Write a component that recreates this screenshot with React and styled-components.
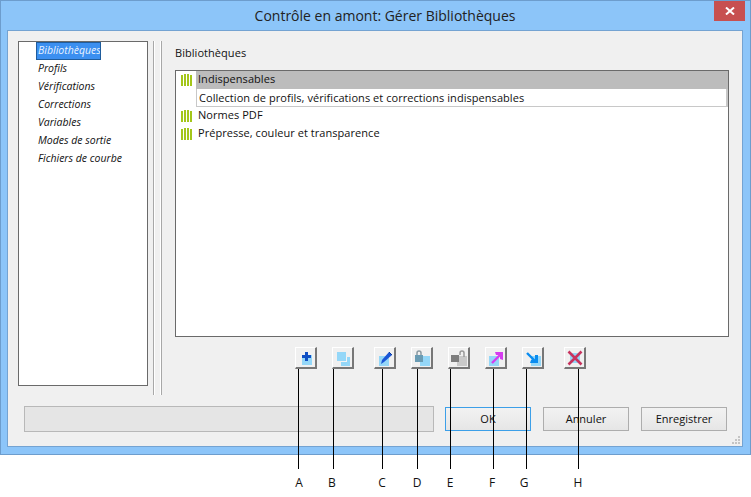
import React from 'react';
import styled, { createGlobalStyle } from 'styled-components';

const GlobalStyle = createGlobalStyle`
  html, body {
    margin: 0;
    padding: 0;
    background: #fff;
    font-family: 'Open Sans', 'Noto Sans', sans-serif;
    color: #111;
  }
`;

const Page = styled.div`
  position: relative;
  width: 751px;
  height: 497px;
  overflow: hidden;
`;

const Window = styled.div`
  box-sizing: border-box;
  width: 751px;
  height: 455px;
  display: flex;
  flex-direction: column;
  background: #8cc5f9;
  border: 1px solid #6d9dcd;
  padding: 0 7px 7px 6px;
`;

const TitleBar = styled.div`
  position: relative;
  height: 29px;
  flex: none;
  display: flex;
  align-items: center;
  justify-content: center;
  padding-left: 20px;
  font-size: 14px;
  color: #222;
`;

const CloseButton = styled.div`
  position: absolute;
  right: -2px;
  top: 0;
  width: 31px;
  height: 20px;
  background: #c75050;
  display: flex;
  align-items: center;
  justify-content: center;
`;

const Client = styled.div`
  position: relative;
  box-sizing: border-box;
  flex: 1;
  display: flex;
  flex-direction: column;
  background: #f0f0f0;
  border: 1px solid #74a3d2;
  padding: 10px 15px 0 10px;
`;

const Main = styled.div`
  display: flex;
  height: 354px;
`;

const NavList = styled.div`
  box-sizing: border-box;
  flex: none;
  width: 130px;
  height: 345px;
  background: #fff;
  border: 1px solid #6a6a6a;
  padding: 0 0 0 17px;
  display: flex;
  flex-direction: column;
  align-items: flex-start;
`;

const NavItem = styled.div`
  box-sizing: border-box;
  height: 18px;
  line-height: 16px;
  font-size: 10.5px;
  font-style: italic;
  padding: 0 2px;
  white-space: nowrap;
  ${({ $selected }) => $selected && `
    width: 65px;
    background: #3b8ff0;
    color: #e8f2ff;
    outline: 1px solid #1f5c9c;
    outline-offset: -1px;
  `}
`;

const Sash = styled.div`
  flex: none;
  width: 7px;
  margin-left: 5px;
  border-left: 1px solid #a8a8a8;
  border-right: 1px solid #a8a8a8;
  box-shadow: inset 1px 0 0 #fff, inset -1px 0 0 #fff;
`;

const Content = styled.div`
  flex: none;
  width: 554px;
  margin-left: 13px;
  display: flex;
  flex-direction: column;
`;

const SectionTitle = styled.div`
  height: 29px;
  line-height: 24px;
  font-size: 11px;
  letter-spacing: 0.05px;
`;

const Tree = styled.div`
  box-sizing: border-box;
  width: 554px;
  height: 267px;
  background: #fff;
  border: 1px solid #6a6a6a;
  padding: 0 0 0 5px;
`;

const TreeRow = styled.div`
  display: flex;
  align-items: center;
  height: 18px;
  font-size: 11px;
  letter-spacing: 0.05px;
`;

const RowIcon = styled.svg`
  flex: none;
  width: 12px;
  height: 12px;
  margin-right: 3px;
`;

const RowLabel = styled.div`
  flex: 1;
  height: 18px;
  line-height: 16px;
  padding-left: 2px;
  white-space: nowrap;
  background: ${({ $selected }) => ($selected ? '#bcbcbc' : 'transparent')};
`;

const Description = styled.div`
  box-sizing: border-box;
  height: 18px;
  margin-left: 15px;
  padding-left: 2px;
  line-height: 17px;
  font-size: 11px;
  letter-spacing: 0.05px;
  white-space: nowrap;
  border: 1px solid #c8c8c8;
  border-top: 0;
  border-right-width: 2px;
`;

const Toolbar = styled.div`
  display: flex;
  height: 22px;
  margin-top: 10px;
  margin-left: 120px;
`;

const ToolButton = styled.div`
  box-sizing: border-box;
  width: 22px;
  height: 22px;
  margin-left: ${({ $gap }) => $gap}px;
  background: #f0f0f0;
  border-top: 1px solid #fff;
  border-left: 1px solid #fff;
  border-right: 2px solid #777;
  border-bottom: 2px solid #777;
  display: flex;
  align-items: center;
  justify-content: center;
`;

const Footer = styled.div`
  display: flex;
  align-items: center;
  height: 26px;
  margin-top: 11px;
  margin-left: 6px;
`;

const StatusBox = styled.div`
  box-sizing: border-box;
  flex: none;
  width: 410px;
  height: 26px;
  background: #e5e5e5;
  border: 1px solid #b8b8b8;
  margin-right: 11px;
`;

const DialogButton = styled.div`
  box-sizing: border-box;
  flex: none;
  width: 86px;
  height: 24px;
  margin-right: 12px;
  text-align: center;
  line-height: 22px;
  font-size: 11px;
  color: #111;
  background: linear-gradient(#f2f2f2, #e6e6e6);
  border: 1px solid ${({ $default }) => ($default ? '#3c9fe8' : '#adadad')};
`;

const Grip = styled.svg`
  position: absolute;
  right: 1px;
  bottom: 1px;
  width: 10px;
  height: 10px;
`;

const Callout = styled.div`
  position: absolute;
  top: 369px;
  left: ${({ $x }) => $x}px;
  width: 1px;
  height: 100px;
  background: #000;
`;

const CalloutLabel = styled.div`
  position: absolute;
  top: 475px;
  left: ${({ $x }) => $x}px;
  width: 20px;
  margin-left: -10px;
  text-align: center;
  font-size: 12px;
  line-height: 16px;
  color: #111;
`;

const BarsIcon = () => (
  <RowIcon viewBox="0 0 12 12">
    <rect x="0" y="1" width="2" height="11" fill="#a4c61a" />
    <rect x="3" y="0" width="2" height="12" fill="#a4c61a" />
    <rect x="6" y="0" width="2" height="12" fill="#a4c61a" />
    <rect x="9" y="1" width="2" height="11" fill="#a4c61a" />
  </RowIcon>
);

const Glyph = ({ children }) => (
  <svg width="18" height="18" viewBox="0 0 18 18">{children}</svg>
);

const LIGHT = '#94d7f8';

const toolButtons = [
  {
    gap: 0,
    icon: (
      <Glyph>
        <rect x="5" y="6" width="10" height="10" fill={LIGHT} />
        <path d="M8 3h3v3h3v3h-3v3H8V9H5V6h3z" fill="#0f4fc4" />
      </Glyph>
    ),
  },
  {
    gap: 15,
    icon: (
      <Glyph>
        <rect x="7" y="8" width="9" height="9" fill={LIGHT} />
        <rect x="3" y="3" width="9" height="9" fill={LIGHT} />
        <path d="M12 8h1v5H7v-1h5z" fill="#f4f4f4" />
      </Glyph>
    ),
  },
  {
    gap: 20,
    icon: (
      <Glyph>
        <rect x="3" y="7" width="10" height="10" fill={LIGHT} />
        <path d="M5 15l1-4 7-8 3 3-8 7z" fill="#1a56d6" />
        <path d="M13 3l3 3" stroke="#0b3a9e" strokeWidth="1" />
      </Glyph>
    ),
  },
  {
    gap: 15,
    icon: (
      <Glyph>
        <rect x="7" y="7" width="10" height="10" fill={LIGHT} />
        <rect x="2" y="6" width="8" height="7" fill="#6a9cb4" />
        <path d="M4 6V4a2 2 0 0 1 4 0v2" fill="none" stroke="#8a9aa2" strokeWidth="1.5" />
      </Glyph>
    ),
  },
  {
    gap: 15,
    icon: (
      <Glyph>
        <rect x="7" y="7" width="10" height="10" fill="#c9c9c9" />
        <rect x="1" y="6" width="8" height="7" fill="#7d7d7d" />
        <path d="M10 6V4a2 2 0 0 1 4 0v4" fill="none" stroke="#9a9a9a" strokeWidth="1.5" />
      </Glyph>
    ),
  },
  {
    gap: 15,
    icon: (
      <Glyph>
        <rect x="2" y="7" width="10" height="10" fill={LIGHT} />
        <path d="M5 14L14 5" stroke="#d63cf0" strokeWidth="2.4" />
        <path d="M8 3h8v8l-3-1V6H9z" fill="#d63cf0" />
      </Glyph>
    ),
  },
  {
    gap: 15,
    icon: (
      <Glyph>
        <rect x="7" y="7" width="10" height="10" fill={LIGHT} />
        <path d="M3 4l9 9" stroke="#0a8cf0" strokeWidth="2.4" />
        <path d="M14 6v8H6l1-3h4V6z" fill="#0a8cf0" />
      </Glyph>
    ),
  },
  {
    gap: 20,
    icon: (
      <Glyph>
        <rect x="4" y="4" width="10" height="10" fill={LIGHT} />
        <path d="M2.5 2.5l13 13M15.5 2.5l-13 13" stroke="#c8325e" strokeWidth="2.6" />
      </Glyph>
    ),
  },
];

const callouts = [
  { label: 'A', line: 298, text: 299 },
  { label: 'B', line: 333, text: 332 },
  { label: 'C', line: 382, text: 382 },
  { label: 'D', line: 417, text: 417 },
  { label: 'E', line: 450, text: 450 },
  { label: 'F', line: 493, text: 492 },
  { label: 'G', line: 526, text: 524 },
  { label: 'H', line: 578, text: 578 },
];

const navItems = ['Profils', 'Vérifications', 'Corrections', 'Variables', 'Modes de sortie', 'Fichiers de courbe'];

const App = () => (
  <Page>
    <GlobalStyle />
    <Window>
      <TitleBar>
        Contrôle en amont: Gérer Bibliothèques
        <CloseButton>
          <svg width="10" height="8" viewBox="0 0 10 8">
            <path d="M1 0.5l8 7M9 0.5l-8 7" stroke="#fff" strokeWidth="2" />
          </svg>
        </CloseButton>
      </TitleBar>
      <Client>
        <Main>
          <NavList>
            <NavItem $selected>Bibliothèques</NavItem>
            {navItems.map((item) => (
              <NavItem key={item}>{item}</NavItem>
            ))}
          </NavList>
          <Sash />
          <Content>
            <SectionTitle>Bibliothèques</SectionTitle>
            <Tree>
              <TreeRow>
                <BarsIcon />
                <RowLabel $selected>Indispensables</RowLabel>
              </TreeRow>
              <Description>Collection de profils, vérifications et corrections indispensables</Description>
              <TreeRow>
                <BarsIcon />
                <RowLabel>Normes PDF</RowLabel>
              </TreeRow>
              <TreeRow>
                <BarsIcon />
                <RowLabel>Prépresse, couleur et transparence</RowLabel>
              </TreeRow>
            </Tree>
            <Toolbar>
              {toolButtons.map((btn, i) => (
                <ToolButton key={i} $gap={btn.gap}>{btn.icon}</ToolButton>
              ))}
            </Toolbar>
          </Content>
        </Main>
        <Footer>
          <StatusBox />
          <DialogButton $default>OK</DialogButton>
          <DialogButton>Annuler</DialogButton>
          <DialogButton>Enregistrer</DialogButton>
        </Footer>
        <Grip viewBox="0 0 10 10">
          <path d="M7 1h2v2H7zM4 4h2v2H4zM7 4h2v2H7zM1 7h2v2H1zM4 7h2v2H4zM7 7h2v2H7z" fill="#c4c4c4" />
        </Grip>
      </Client>
    </Window>
    {callouts.map((c) => (
      <React.Fragment key={c.label}>
        <Callout $x={c.line} />
        <CalloutLabel $x={c.text}>{c.label}</CalloutLabel>
      </React.Fragment>
    ))}
  </Page>
);

export default App;
